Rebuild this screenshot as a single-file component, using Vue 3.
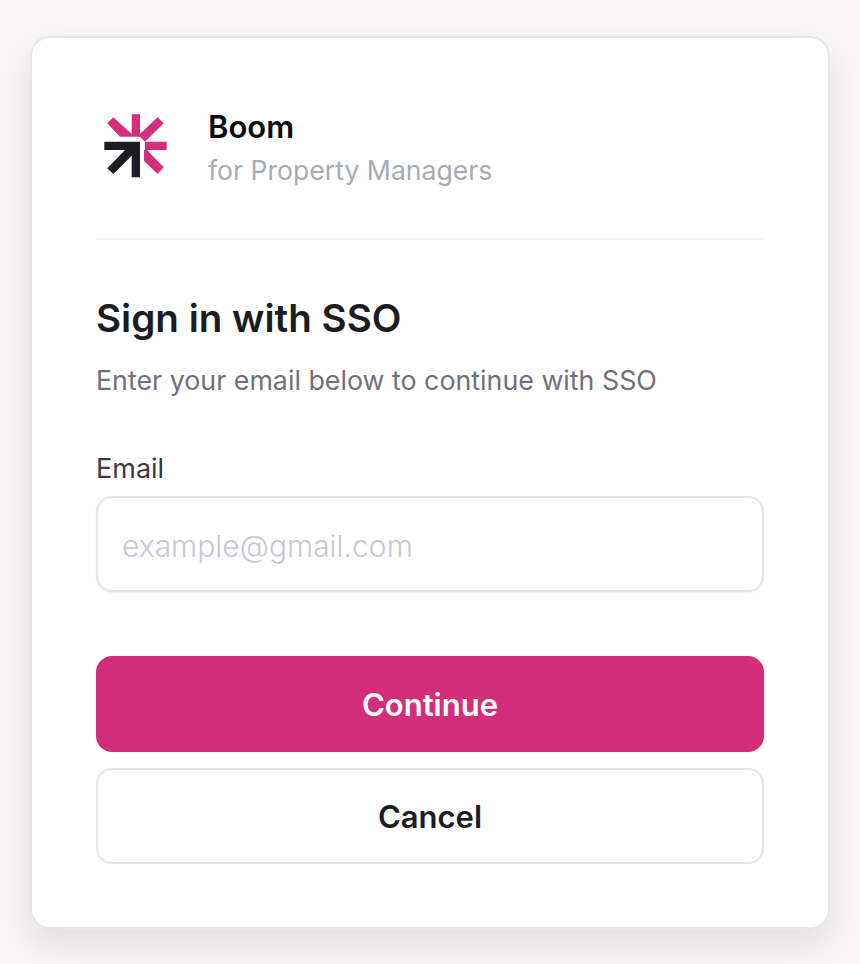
<script setup>
const title = 'Boom'
</script>

<template>
  <main class="page">
    <section class="card">
      <header class="brand">
        <svg class="logo" viewBox="0 0 90 90" aria-hidden="true">
          <path fill="#d42e7b" d="M41.7 14.3H50V34L67.5 17.3L73.7 23.3L55 41.7L50 36.7H30L17.3 23.3L23.3 17.3L41.7 34ZM55 41.7H76.7V50H55ZM54 50H57L73.7 67.3L67.5 73.8L54 61Z"/>
          <path fill="#1c1d22" d="M14.3 41.7H50V77.3H41.7V55.7L23.3 74L17.3 68.3L35 50H14.3Z"/>
        </svg>
        <div class="brand-text">
          <div class="name">{{ title }}</div>
          <div class="tag">for Property Managers</div>
        </div>
      </header>
      <h1>Sign in with SSO</h1>
      <p class="sub">Enter your email below to continue with SSO</p>
      <label class="label" for="email">Email</label>
      <input id="email" class="input" type="text" placeholder="example@gmail.com" />
      <button class="btn primary" type="button">Continue</button>
      <button class="btn secondary" type="button">Cancel</button>
    </section>
  </main>
</template>

<style scoped>
.page {
  box-sizing: border-box;
  width: 860px;
  height: 964px;
  padding: 36px 30px;
  background: #f8f6f7;
  font-family: Inter, "Liberation Sans", sans-serif;
  overflow: hidden;
}
.card {
  box-sizing: border-box;
  width: 800px;
  height: 893px;
  padding: 54px 64px 0;
  background: #fff;
  border: 2px solid #e8e7e8;
  border-bottom-color: #e9e7e8;
  border-radius: 20px;
  box-shadow: 0 16px 36px rgba(30, 20, 30, 0.1);
  display: flex;
  flex-direction: column;
}
.brand {
  display: flex;
  align-items: flex-start;
  gap: 22px;
  height: 148px;
  border-bottom: 2px solid #f3f2f3;
  box-sizing: border-box;
}
.logo {
  width: 90px;
  height: 90px;
  margin-top: 8px;
  margin-left: -6px;
  margin-right: 6px;
}
.brand-text { padding-top: 15px; }
.name { font-size: 31px; font-weight: 600; line-height: 40px; color: #0c0c0f; }
.tag { font-size: 26.6px; line-height: 46px; color: #a9abb3; }
h1 {
  margin: 53px 0 0;
  font-size: 38.6px;
  line-height: 50px;
  font-weight: 600;
  color: #1c1d22;
}
.sub { margin: 17px 0 0; font-size: 26.8px; line-height: 40px; color: #71717a; }
.label { margin-top: 49px; font-size: 27px; line-height: 40px; color: #3a3b42; }
.input {
  box-sizing: border-box;
  margin-top: 7px;
  height: 96px;
  padding: 3px 24px 0;
  border: 2px solid #e6e6e8;
  border-radius: 16px;
  box-shadow: 0 1px 2px rgba(0,0,0,.06);
  font: 300 30px Inter, "Liberation Sans", sans-serif;
  outline: none;
}
.input::placeholder { color: #c6c8d2; opacity: 1; }
.btn {
  box-sizing: border-box;
  height: 96px;
  border-radius: 16px;
  font: 600 31px Inter, "Liberation Sans", sans-serif;
}
.primary { margin-top: 64px; background: #d42e7b; color: #fff; border: 0; }
.secondary { margin-top: 16px; background: #fff; color: #1c1d22; border: 2px solid #e6e6e8; }
</style>
